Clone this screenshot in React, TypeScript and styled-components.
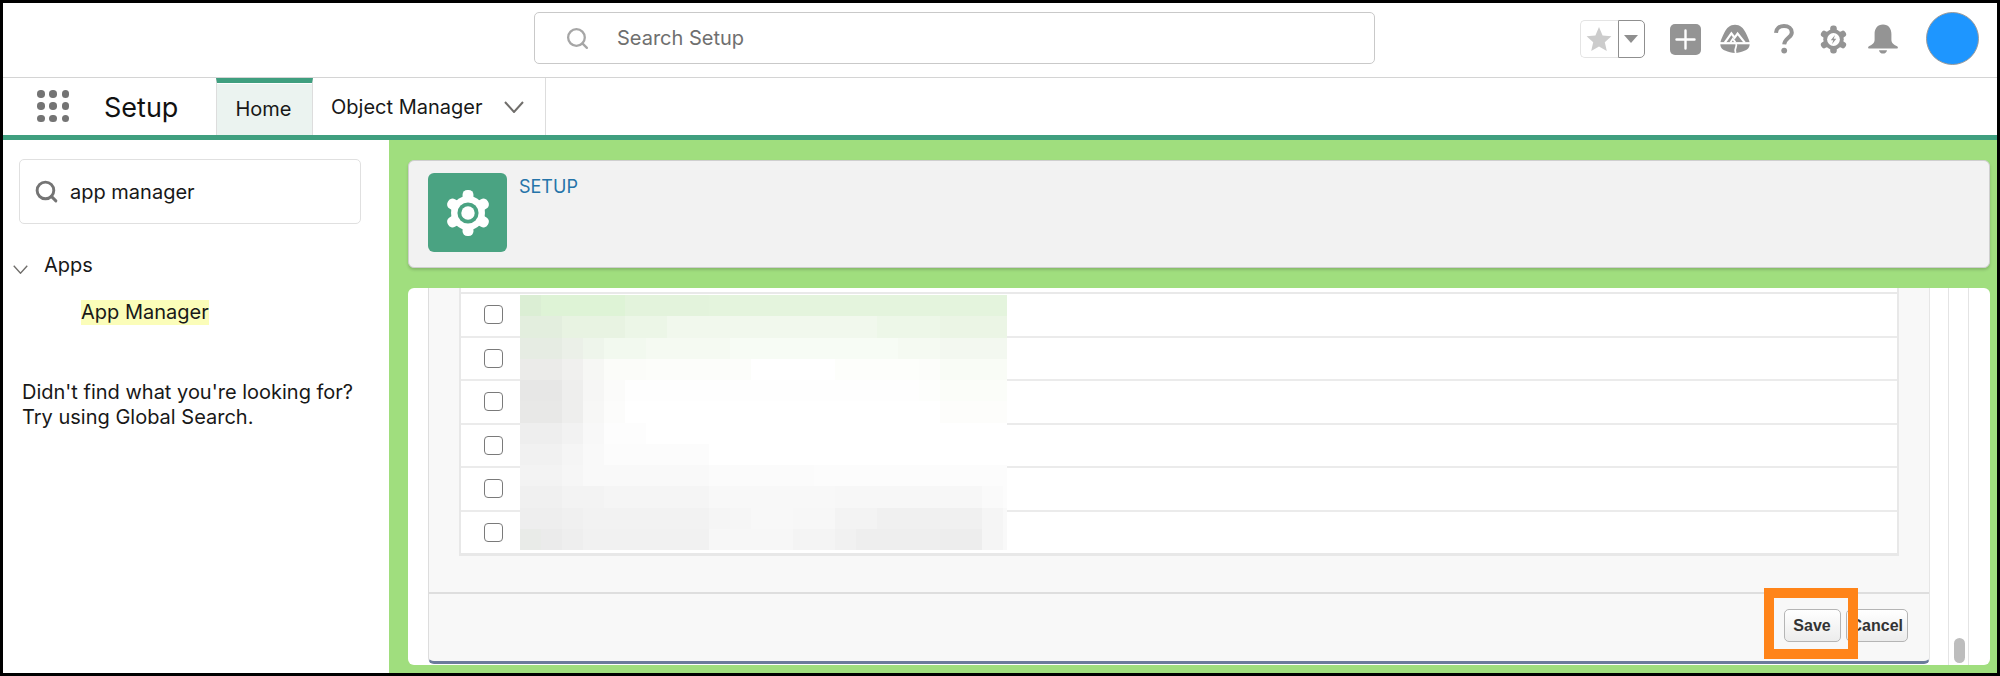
import React from "react";
import styled, { createGlobalStyle } from "styled-components";
import { Search } from "lucide-react";

const GlobalStyle = createGlobalStyle`
  * {
    box-sizing: border-box;
  }
  html,
  body {
    margin: 0;
    background: #000000;
  }
  body {
    font-family: Inter, "Liberation Sans", sans-serif;
    color: #181818;
  }
`;

// pixelated patch that hides the row names, as [cell count, colour] runs per row
const BLUR_ROWS: [number, string][][] = [
  [[1, "#dbeed4"], [4, "#def3d6"], [4, "#e3f3dc"], [15, "#e4f4dd"]],
  [[2, "#e3eede"], [3, "#e8f3e2"], [2, "#ecf6e7"], [10, "#f1f8ed"], [3, "#edf7e8"], [4, "#ebf5e5"]],
  [[2, "#e6ece3"], [1, "#ebf0e8"], [1, "#eef5eb"], [2, "#f2f9ef"], [4, "#f5faf2"], [8, "#f7fcf5"], [2, "#f5faf2"], [4, "#f3f8f0"]],
  [[2, "#ebebe9"], [1, "#f0f0ee"], [1, "#f6f7f4"], [2, "#fbfcf9"], [5, "#fcfdfa"], [4, "#ffffff"], [4, "#fdfefb"], [1, "#fcfdfa"], [4, "#f9fcf6"]],
  [[2, "#e7e7e6"], [1, "#eeeeed"], [1, "#f6f6f5"], [1, "#fbfbfa"], [14, "#fefefe"], [1, "#fdfefc"], [4, "#fbfdf9"]],
  [[2, "#e8e8e7"], [1, "#eeeeed"], [1, "#f7f7f6"], [1, "#fcfcfb"], [15, "#ffffff"], [4, "#fdfdfb"]],
  [[2, "#eeeeee"], [1, "#f2f2f2"], [1, "#f8f8f8"], [2, "#fdfdfd"], [18, "#ffffff"]],
  [[2, "#f1f1f1"], [1, "#f5f5f5"], [1, "#f9f9f9"], [5, "#fcfcfc"], [15, "#ffffff"]],
  [[2, "#f3f3f3"], [1, "#f6f6f6"], [6, "#f9f9f9"], [5, "#fbfbfb"], [10, "#fcfcfc"]],
  [[2, "#f0f0f0"], [2, "#f3f3f3"], [5, "#f5f5f5"], [6, "#f8f8f8"], [7, "#f7f7f7"], [1, "#fafafa"], [1, "#fcfcfc"]],
  [[2, "#eeeeee"], [1, "#f0f0f0"], [6, "#f2f2f2"], [1, "#f5f5f5"], [1, "#f6f6f6"], [2, "#f8f8f8"], [2, "#f7f7f7"], [2, "#f3f3f3"], [5, "#f0f0f0"], [1, "#f5f5f5"], [1, "#f9f9f9"]],
  [[1, "#e9ebe8"], [1, "#ebebeb"], [1, "#eeeeee"], [6, "#f1f1f1"], [4, "#f7f7f7"], [2, "#f4f4f4"], [1, "#f1f1f1"], [4, "#eeeeee"], [2, "#ededed"], [1, "#f5f5f5"], [1, "#f9f9f9"]],
];

function BlurPatch() {
  return (
    <StBlur viewBox="0 0 487 255" shapeRendering="crispEdges">
      {BLUR_ROWS.map((runs, row) => {
        let col = 0;
        return runs.map(([count, fill]) => {
          const x = col * 21;
          col += count;
          return (
            <rect key={`${row}-${x}`} x={x} y={row * 21.25} width={count * 21} height={21.25} fill={fill} />
          );
        });
      })}
    </StBlur>
  );
}

function Chevron({ width, color, weight }: { width: number; color: string; weight: number }) {
  return (
    <svg width={width} height={width * 0.6} viewBox="0 0 20 12">
      <path d="M1 1 L10 11 L19 1" fill="none" stroke={color} strokeWidth={weight} />
    </svg>
  );
}

function GearIcon({ size, body, hole, bolt }: { size: number; body: string; hole: string; bolt?: string }) {
  return (
    <svg width={size} height={size} viewBox="0 0 30 30">
      {[0, 60, 120, 180, 240, 300].map((angle) => (
        <rect key={angle} x="11.6" y="0.6" width="6.8" height="8" rx="3" fill={body} transform={`rotate(${angle} 15 15)`} />
      ))}
      <circle cx="15" cy="15" r="10.6" fill={body} />
      <circle cx="15" cy="15" r="6.6" fill={hole} />
      {bolt ? (
        <path d="M16.6 10.4 L12.2 15.8 H14.8 L13.4 19.8 L17.9 14.2 H15.2 Z" fill={bolt} />
      ) : (
        <circle cx="15" cy="15" r="4.2" fill={body} />
      )}
    </svg>
  );
}

function TrailheadIcon() {
  return (
    <svg width="30" height="30" viewBox="0 0 30 30">
      <path
        d="M15 .8 C20 .8 23.5 4 25.6 8.6 C27.4 12.4 29.2 15.8 29.6 18.6 C30 22.8 28.6 25.2 25 26.6 C21.6 28.2 18.4 29 15 29 C11.6 29 8.4 28.2 5 26.6 C1.4 25.2 0 22.8 .4 18.6 C.8 15.8 2.6 12.4 4.4 8.6 C6.5 4 10 .8 15 .8 Z"
        fill="#949494"
      />
      <path d="M0 19.2 H30" stroke="#ffffff" strokeWidth="2.2" />
      <path d="M4.8 18.6 L11.4 9.4 L14.6 13.6 L17.6 9.6 L24.8 18.6" fill="none" stroke="#ffffff" strokeWidth="2.2" />
      <path d="M10.4 18.4 L12.8 14.8 L15.4 18.4 M15.8 20 C18.2 22 13.4 24 15.6 29" fill="none" stroke="#ffffff" strokeWidth="1.8" />
    </svg>
  );
}

function App() {
  const rows = [0, 1, 2, 3, 4, 5];
  return (
    <StPage>
      <GlobalStyle />
      <StHeader>
        <StGlobalSearch>
          <Search size={25} color="#a6a6a6" strokeWidth={2.2} />
          <span>Search Setup</span>
        </StGlobalSearch>
        <StActions>
          <StFavorites>
            <StFavStar>
              <svg width="26" height="26" viewBox="0 0 26 26">
                <path d="M13 1 L16.6 9.4 L25.4 10.2 L18.8 16.2 L20.8 25 L13 20.4 L5.2 25 L7.2 16.2 L.6 10.2 L9.4 9.4 Z" fill="#cccccc" />
              </svg>
            </StFavStar>
            <StFavCaret>
              <svg width="14" height="8" viewBox="0 0 14 8">
                <path d="M0 0 H14 L7 8 Z" fill="#8f8f8f" />
              </svg>
            </StFavCaret>
          </StFavorites>
          <StActionSlot>
            <svg width="31" height="31" viewBox="0 0 31 31">
              <rect width="31" height="31" rx="5" fill="#949494" />
              <path d="M15.5 6.5 V24.5 M6.5 15.5 H24.5" stroke="#ffffff" strokeWidth="2.4" strokeLinecap="round" />
            </svg>
          </StActionSlot>
          <StActionSlot>
            <TrailheadIcon />
          </StActionSlot>
          <StActionSlot>
            <svg width="20" height="30" viewBox="0 0 20 30">
              <path d="M2 8.8 C2.2 4.4 5.4 2 10 2 C14.6 2 17.8 4.6 17.8 8.4 C17.8 13.6 10.6 14 10.2 20.4" fill="none" stroke="#949494" strokeWidth="4" />
              <circle cx="10.2" cy="26.6" r="2.9" fill="#949494" />
            </svg>
          </StActionSlot>
          <StActionSlot>
            <GearIcon size={29} body="#949494" hole="#ffffff" bolt="#949494" />
          </StActionSlot>
          <StActionSlot>
            <svg width="30" height="30" viewBox="0 0 30 30">
              <path d="M15 .6 C20.6 .6 23.4 4.8 23.4 10 V15.8 C23.4 19.4 26 20.6 29.4 22.6 C30.2 23.2 30 24.6 28.8 24.6 H1.2 C0 24.6 -.2 23.2 .6 22.6 C4 20.6 6.6 19.4 6.6 15.8 V10 C6.6 4.8 9.4 .6 15 .6 Z" fill="#949494" />
              <path d="M11 26.2 H19 C18.6 28.4 17 29.6 15 29.6 C13 29.6 11.4 28.4 11 26.2 Z" fill="#949494" />
            </svg>
          </StActionSlot>
          <StAvatar />
        </StActions>
      </StHeader>

      <StNav>
        <StLauncher>
          {Array.from({ length: 9 }, (_, i) => (
            <StLauncherDot key={i} />
          ))}
        </StLauncher>
        <StAppName>Setup</StAppName>
        <StHomeTab>Home</StHomeTab>
        <StObjectTab>
          Object Manager
          <Chevron width={20} color="#706e6b" weight={2} />
        </StObjectTab>
      </StNav>

      <StBody>
        <StSidebar>
          <StQuickFind>
            <Search size={25} color="#747474" strokeWidth={2.8} />
            <span>app manager</span>
          </StQuickFind>
          <StTreeHead>
            <StTreeChevron>
              <Chevron width={15} color="#706e6b" weight={1.8} />
            </StTreeChevron>
            Apps
          </StTreeHead>
          <StTreeLeaf>
            <mark>App Manager</mark>
          </StTreeLeaf>
          <StHint>
            Didn't find what you're looking for?
            <br />
            Try using Global Search.
          </StHint>
        </StSidebar>

        <StMain>
          <StPageHeader>
            <StHeaderIcon>
              <GearIcon size={48} body="#ffffff" hole="#4aa382" />
            </StHeaderIcon>
            <StCrumb>SETUP</StCrumb>
          </StPageHeader>

          <StContentCard>
            <StPanel>
              <StTable>
                {rows.map((row) => (
                  <StRow key={row}>
                    <StCheckbox />
                  </StRow>
                ))}
                <BlurPatch />
              </StTable>
              <StFooter>
                <StButton>Save</StButton>
                <StButton>Cancel</StButton>
                <StHighlight />
              </StFooter>
            </StPanel>
            <StScrollTrack>
              <StScrollThumb />
            </StScrollTrack>
          </StContentCard>
        </StMain>
      </StBody>
    </StPage>
  );
}

export default App;

const StPage = styled.div`
  width: 2000px;
  height: 676px;
  border: 3px solid #000000;
  overflow: hidden;
  display: flex;
  flex-direction: column;
  background-color: #ffffff;
`;

const StHeader = styled.header`
  height: 75px;
  flex: none;
  display: flex;
  align-items: flex-start;
  padding-left: 531px;
  border-bottom: 1px solid #d4d4d4;
`;

const StGlobalSearch = styled.div`
  width: 841px;
  height: 52px;
  margin-top: 9px;
  padding-left: 30px;
  display: flex;
  align-items: center;
  gap: 27px;
  border: 1px solid #c9c9c9;
  border-radius: 5px;
  font-size: 20px;
  color: #6f6f6f;
`;

const StActions = styled.div`
  margin-left: auto;
  height: 74px;
  display: flex;
  align-items: center;
  padding-right: 18px;
`;

const StFavorites = styled.div`
  width: 65px;
  height: 38px;
  margin-top: -3px;
  margin-right: 16px;
  display: flex;
`;

const StFavStar = styled.div`
  width: 38px;
  display: flex;
  align-items: center;
  justify-content: center;
  border: 1px solid #e4e4e4;
  border-right: none;
  border-radius: 5px 0 0 5px;
`;

const StFavCaret = styled.div`
  width: 27px;
  display: flex;
  align-items: center;
  justify-content: center;
  border: 1.5px solid #8f8f8f;
  border-radius: 0 5px 5px 0;
`;

const StActionSlot = styled.div`
  width: 49.5px;
  margin-top: -2px;
  display: flex;
  justify-content: center;
`;

const StAvatar = styled.div`
  width: 53px;
  height: 53px;
  margin-left: 18px;
  margin-top: -3px;
  border-radius: 50%;
  background-color: #1e96ff;
  border: 1.5px solid #9a9a9a;
`;

const StNav = styled.nav`
  height: 62px;
  flex: none;
  display: flex;
  border-bottom: 5px solid #3f9f7f;
`;

const StLauncher = styled.div`
  width: 32px;
  height: 32px;
  margin: 12px 0 0 34px;
  display: grid;
  grid-template-columns: repeat(3, 7.5px);
  grid-template-rows: repeat(3, 7.5px);
  justify-content: space-between;
  align-content: space-between;
`;

const StLauncherDot = styled.span`
  border-radius: 50%;
  background-color: #747474;
`;

const StAppName = styled.div`
  width: 112px;
  margin-left: 35px;
  font-size: 27px;
  line-height: 60px;
  color: #111111;
`;

const StHomeTab = styled.div`
  width: 97px;
  padding-right: 2px;
  border-top: 5px solid #3f9f7f;
  border-left: 1px solid #dddddd;
  border-right: 1px solid #dddddd;
  background-color: #ebf3f0;
  box-shadow: inset 0 1px 0 #ffffff;
  display: flex;
  align-items: center;
  justify-content: center;
  font-size: 20px;
`;

const StObjectTab = styled.div`
  width: 233px;
  padding: 0 21px 0 18px;
  border-right: 1px solid #dddddd;
  display: flex;
  align-items: center;
  justify-content: space-between;
  font-size: 20px;
`;

const StBody = styled.div`
  flex: 1;
  min-height: 0;
  display: flex;
`;

const StSidebar = styled.aside`
  width: 386px;
  flex: none;
  padding: 19px 30px 0 16px;
`;

const StQuickFind = styled.div`
  width: 342px;
  height: 65px;
  padding-left: 14px;
  display: flex;
  align-items: center;
  gap: 11px;
  border: 1px solid #e0e0e0;
  border-radius: 5px;
  font-size: 20px;
`;

const StTreeHead = styled.div`
  margin: 28px 0 0 -6px;
  display: flex;
  align-items: center;
  gap: 16px;
  font-size: 20px;
  line-height: 26px;
`;

const StTreeChevron = styled.span`
  display: flex;
  margin-top: 8px;
`;

const StTreeLeaf = styled.div`
  margin: 22px 0 0 62px;
  font-size: 20px;
  line-height: 25px;

  mark {
    display: inline-block;
    background-color: #fbfdb9;
    color: #181818;
  }
`;

const StHint = styled.p`
  margin: 55px 0 0 3px;
  font-size: 20px;
  line-height: 25px;
  white-space: nowrap;
`;

const StMain = styled.main`
  flex: 1;
  min-width: 0;
  padding: 20px 7px 8px 19px;
  display: flex;
  flex-direction: column;
  gap: 20px;
  background-color: #a0de7e;
`;

const StPageHeader = styled.section`
  height: 108px;
  flex: none;
  padding: 12px 19px;
  display: flex;
  gap: 12px;
  background-color: #f2f2f2;
  border: 1px solid #cfcfcf;
  border-radius: 6px;
  box-shadow: 0 2px 3px rgba(0, 0, 0, 0.16);
`;

const StHeaderIcon = styled.div`
  width: 79px;
  height: 79px;
  display: flex;
  align-items: center;
  justify-content: center;
  background-color: #4aa382;
  border-radius: 6px;
`;

const StCrumb = styled.div`
  font-size: 18px;
  line-height: 28px;
  color: #2574a9;
`;

const StContentCard = styled.section`
  flex: 1;
  min-height: 0;
  display: flex;
  padding-left: 20px;
  background-color: #ffffff;
  border-radius: 6px;
  overflow: hidden;
`;

const StPanel = styled.div`
  position: relative;
  width: 1502px;
  flex: none;
  display: flex;
  flex-direction: column;
  background-color: #f8f8f8;
  border-left: 1px solid #dddddd;
  border-right: 1px solid #e6e6e6;
  border-bottom: 3px solid #6b7b9b;
  border-radius: 0 0 6px 6px;
  margin-bottom: 1px;
`;

const StTable = styled.div`
  position: relative;
  height: 268px;
  flex: none;
  margin: 0 30px;
  padding-top: 6px;
  background-color: #ffffff;
  border-left: 2px solid #e8e8e8;
  border-right: 2px solid #e8e8e8;
  border-bottom: 3px solid #e8e8e8;
  display: flex;
  flex-direction: column;
  box-shadow: inset 0 4px 0 #ffffff, inset 0 6px 0 #e9e9e9;
`;

const StRow = styled.div`
  height: 43.5px;
  flex: none;
  display: flex;
  align-items: center;
  padding-left: 23px;
  border-bottom: 2px solid #ebebeb;

  &:last-of-type {
    height: auto;
    flex: 1;
    border-bottom: none;
  }
`;

const StCheckbox = styled.span`
  width: 19px;
  height: 19px;
  border: 1.5px solid #7a7a7a;
  border-radius: 4px;
  background-color: #ffffff;
`;

const StBlur = styled.svg`
  position: absolute;
  left: 59px;
  top: 7px;
  width: 487px;
  height: 255px;
`;

const StFooter = styled.div`
  margin-top: 36px;
  flex: 1;
  padding: 15px 21px 0 0;
  display: flex;
  justify-content: flex-end;
  align-items: flex-start;
  gap: 5px;
  border-top: 2px solid #dedede;
  position: relative;
`;

const StButton = styled.button`
  height: 33px;
  padding: 0 4px;
  min-width: 57px;
  font-family: "Liberation Sans", Arial, sans-serif;
  font-size: 16px;
  font-weight: 700;
  color: #333333;
  background: linear-gradient(#ffffff, #ececec);
  border: 1px solid #b5b5b5;
  border-radius: 5px;
`;

const StHighlight = styled.div`
  position: absolute;
  left: 1335px;
  top: -6px;
  width: 94px;
  height: 71px;
  border: 10px solid #ff8419;
`;

const StScrollTrack = styled.div`
  position: relative;
  width: 21px;
  flex: none;
  margin-left: 18px;
  border-left: 1px solid #e4e4e4;
  border-right: 1px solid #e4e4e4;
`;

const StScrollThumb = styled.div`
  position: absolute;
  left: 5px;
  bottom: 2px;
  width: 11px;
  height: 25px;
  border-radius: 6px;
  background-color: #bdbdbd;
`;
